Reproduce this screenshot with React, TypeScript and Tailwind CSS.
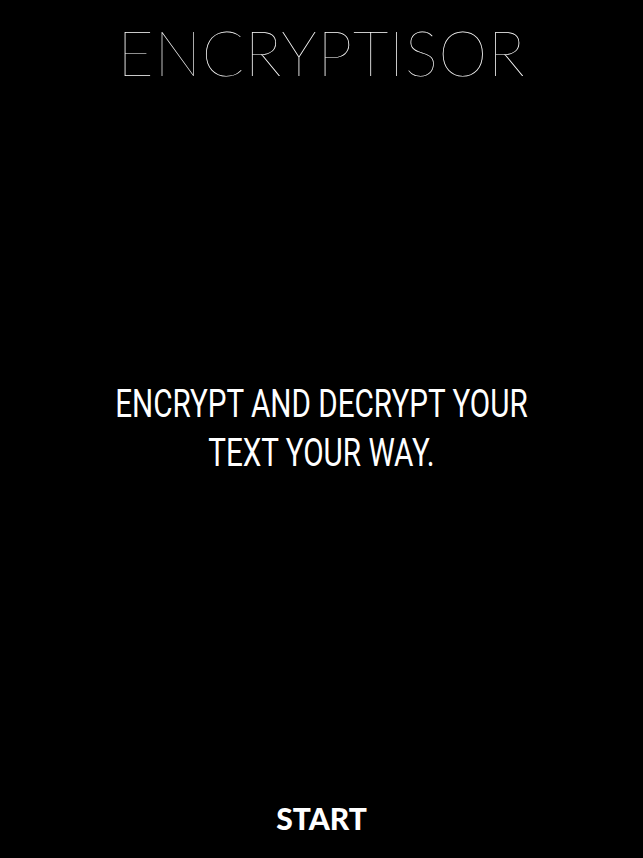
export default function App() {
  return (
    <div className="flex h-[858px] w-full flex-col items-center bg-black text-white">
      <h1 className="mt-[16px] font-['Lato',sans-serif] text-[62px] leading-[72px] font-thin tracking-[0.8px]">
        ENCRYPTISOR
      </h1>
      <div className="flex flex-1 items-center justify-center">
        <p className="-mt-[30px] scale-x-[0.78] text-center font-['Roboto',sans-serif] text-[38px] leading-[49px] font-normal whitespace-nowrap">
          ENCRYPT AND DECRYPT YOUR
          <br />
          TEXT YOUR WAY.
        </p>
      </div>
      <div className="mb-[22px] font-['Lato',sans-serif] text-[30px] leading-[36px] font-black">
        START
      </div>
    </div>
  );
}
